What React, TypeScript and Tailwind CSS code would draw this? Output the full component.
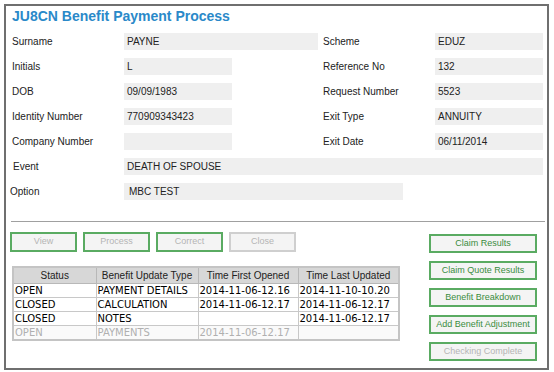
const labelCls = "text-[10px] text-[#222] leading-[17px] [font-family:'Liberation_Sans',Arial,sans-serif]";
const boxCls =
  "h-[17px] bg-[#efefef] pl-[3px] text-[10px] text-[#222] leading-[17px] [font-family:'Liberation_Sans',Arial,sans-serif]";

type Field = { label: string; value: string; wide?: boolean };

const leftFields: Field[] = [
  { label: "Surname", value: "PAYNE", wide: true },
  { label: "Initials", value: "L" },
  { label: "DOB", value: "09/09/1983" },
  { label: "Identity Number", value: "770909343423" },
  { label: "Company Number", value: "" },
];

const rightFields: Field[] = [
  { label: "Scheme", value: "EDUZ" },
  { label: "Reference No", value: "132" },
  { label: "Request Number", value: "5523" },
  { label: "Exit Type", value: "ANNUITY" },
  { label: "Exit Date", value: "06/11/2014" },
];

const rows = [
  { status: "OPEN", type: "PAYMENT DETAILS", first: "2014-11-06-12.16", last: "2014-11-10-10.20" },
  { status: "CLOSED", type: "CALCULATION", first: "2014-11-06-12.17", last: "2014-11-06-12.17" },
  { status: "CLOSED", type: "NOTES", first: "", last: "2014-11-06-12.17" },
  { status: "OPEN", type: "PAYMENTS", first: "2014-11-06-12.17", last: "", muted: true },
];

const sideButtons = [
  { text: "Claim Results" },
  { text: "Claim Quote Results" },
  { text: "Benefit Breakdown" },
  { text: "Add Benefit Adjustment" },
  { text: "Checking Complete", disabled: true },
];

const ActionButton = ({ text, disabled, grey }: { text: string; disabled?: boolean; grey?: boolean }) => (
  <button
    className={`flex items-center justify-center border-2 bg-[#f4f4f4] text-[9px] [font-family:'Liberation_Sans',Arial,sans-serif] ${
      grey ? "border-[#cfcfcf]" : "border-[#5aab62]"
    } ${disabled ? "text-[#b4b4b4]" : "text-[#3a8c40]"}`}
  >
    {text}
  </button>
);

export default function App() {
  return (
    <div className="w-[554px] h-[372px] bg-white pl-[4px] pt-[4px]">
      <div className="w-[545px] h-[366px] border-2 border-[#6f6f6f] px-[6px]">
        <h1 className="pt-[2px] text-[14px] leading-[16px] font-bold text-[#2a89c9] [font-family:'Liberation_Sans',Arial,sans-serif]">
          JU8CN Benefit Payment Process
        </h1>

        <div className="mt-[9px] grid grid-cols-[112px_199px_112px_108px] gap-y-[8px]">
          {leftFields.map((f, i) => (
            <div key={f.label} className="contents">
              <div className={labelCls}>{f.label}</div>
              <div className={`${boxCls} ${f.wide ? "w-[194px]" : "w-[108px]"}`}>{f.value}</div>
              <div className={labelCls}>{rightFields[i].label}</div>
              <div className={boxCls}>{rightFields[i].value}</div>
            </div>
          ))}
          <div className={`${labelCls} pl-[1px]`}>Event</div>
          <div className={`${boxCls} col-span-3`}>DEATH OF SPOUSE</div>
          <div className={`${labelCls} -ml-[2px]`}>Option</div>
          <div className="col-span-3">
            <div className={`${boxCls} w-[279px] pl-[5px]`}>MBC TEST</div>
          </div>
        </div>

        <div className="mt-[21px] ml-[-1px] h-px w-[534px] bg-[#a0a0a0]" />

        <div className="flex mt-[10px]">
          <div className="w-[419px] -ml-[2px]">
            <div className="flex gap-[6px] [&>button]:w-[67px] [&>button]:h-[20px]">
              <ActionButton text="View" disabled />
              <ActionButton text="Process" disabled />
              <ActionButton text="Correct" disabled />
              <ActionButton text="Close" disabled grey />
            </div>

            <table className="mt-[14px] ml-[2px] border-collapse border-2 border-[#c4c4c4] text-[10px] leading-[13px]">
              <thead>
                <tr className="bg-[#d7d7d7] [font-family:'Liberation_Sans',Arial,sans-serif] text-[10px] text-[#222]">
                  <th className="w-[83px] h-[16px] border border-[#b8b8b8] font-normal">Status</th>
                  <th className="w-[102px] border border-[#b8b8b8] font-normal">Benefit Update Type</th>
                  <th className="w-[100px] border border-[#b8b8b8] font-normal">Time First Opened</th>
                  <th className="w-[101px] border border-[#b8b8b8] font-normal">Time Last Updated</th>
                </tr>
              </thead>
              <tbody className="[font-family:'DejaVu_Sans',Verdana,sans-serif]">
                {rows.map((r, i) => (
                  <tr
                    key={i}
                    className={r.muted ? "text-[#b0b0b0] bg-[#fafafa]" : "text-black bg-white"}
                  >
                    <td className="h-[14px] border border-[#c8c8c8] pl-[1px] whitespace-nowrap">{r.status}</td>
                    <td className="border border-[#c8c8c8] pl-[1px] whitespace-nowrap">{r.type}</td>
                    <td className="border border-[#c8c8c8] pl-[1px] whitespace-nowrap">{r.first}</td>
                    <td className="border border-[#c8c8c8] pl-[1px] whitespace-nowrap">{r.last}</td>
                  </tr>
                ))}
              </tbody>
            </table>
          </div>

          <div className="mt-[2px] flex flex-col gap-[8px] [&>button]:w-[108px] [&>button]:h-[19px]">
            {sideButtons.map((b) => (
              <ActionButton key={b.text} text={b.text} disabled={b.disabled} />
            ))}
          </div>
        </div>
      </div>
    </div>
  );
}
